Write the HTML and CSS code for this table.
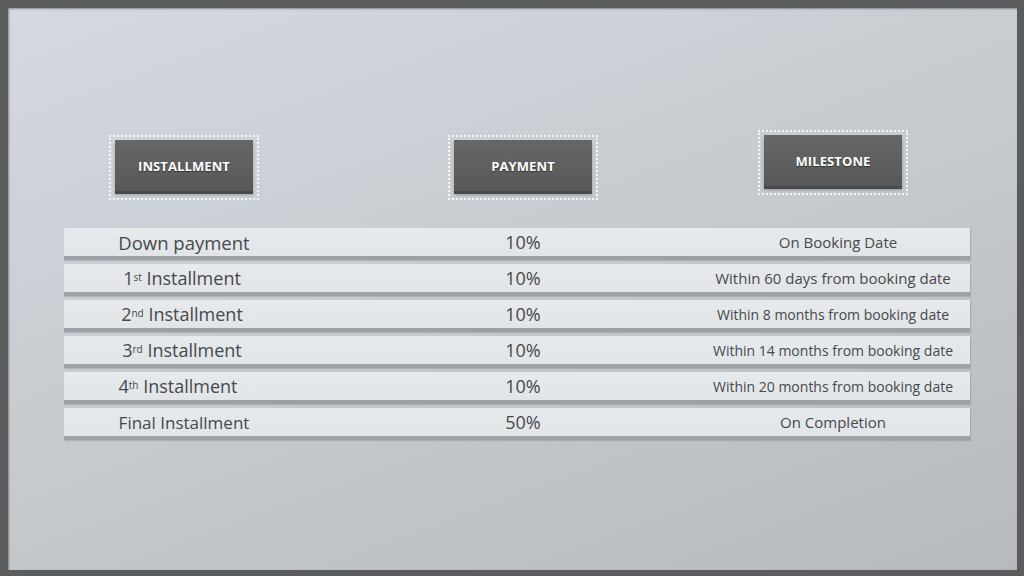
FILE: index.html
```html
<!DOCTYPE html>
<html lang="en">
<head>
<meta charset="utf-8">
<title>Payment Plan</title>
<link rel="stylesheet" href="styles.css">
</head>
<body>
<main class="frame">
  <section class="plan">
    <div class="heads">
      <div class="head-cell"><div class="head-box"><span class="head-label">INSTALLMENT</span></div></div>
      <div class="head-cell"><div class="head-box"><span class="head-label">PAYMENT</span></div></div>
      <div class="head-cell head-cell--raised"><div class="head-box"><span class="head-label">MILESTONE</span></div></div>
    </div>
    <div class="rows">
      <div class="row">
        <div class="cell c1">Down payment</div>
        <div class="cell c2">10%</div>
        <div class="cell c3 c3--shift">On Booking Date</div>
      </div>
      <div class="row">
        <div class="cell c1 c1--ord">1<sup>st</sup> Installment</div>
        <div class="cell c2">10%</div>
        <div class="cell c3">Within 60 days from booking date</div>
      </div>
      <div class="row">
        <div class="cell c1 c1--ord">2<sup>nd</sup> Installment</div>
        <div class="cell c2">10%</div>
        <div class="cell c3 c3--tight">Within 8 months from booking date</div>
      </div>
      <div class="row">
        <div class="cell c1 c1--ord">3<sup>rd</sup> Installment</div>
        <div class="cell c2">10%</div>
        <div class="cell c3 c3--tight">Within 14 months from booking date</div>
      </div>
      <div class="row">
        <div class="cell c1 c1--ord c1--left">4<sup>th</sup> Installment</div>
        <div class="cell c2">10%</div>
        <div class="cell c3 c3--tight">Within 20 months from booking date</div>
      </div>
      <div class="row">
        <div class="cell c1 c1--small">Final Installment</div>
        <div class="cell c2">50%</div>
        <div class="cell c3">On Completion</div>
      </div>
    </div>
  </section>
</main>
</body>
</html>
```

FILE: styles.css
```css
* { box-sizing: border-box; }

html, body {
  margin: 0;
  padding: 0;
  width: 1024px;
  height: 576px;
  overflow: hidden;
}

body {
  font-family: "Open Sans", "Noto Sans", sans-serif;
  color: #46494c;
}

.frame {
  width: 1024px;
  height: 576px;
  border-style: solid;
  border-color: #5c5c5c;
  border-width: 8px 7px 6px 8px;
  background: linear-gradient(160deg, #d3d9df 0%, #c7ccd1 45%, #b6babe 100%);
  box-shadow: inset 1px 1px 2px rgba(0,0,0,0.35);
}

.plan {
  padding: 122px 47px 0 56px;
}

.heads {
  display: grid;
  grid-template-columns: 240px 438px 182px 1fr;
  height: 98px;
}

.head-cell {
  display: flex;
  justify-content: center;
  align-items: flex-start;
  padding-top: 5px;
}

.head-cell--raised { padding-top: 0; }

.head-box {
  flex: none;
  width: 150px;
  height: 65px;
  border: 2px dotted #f4f5f6;
  padding: 3px 4px 7px 4px;
}

.head-label {
  display: flex;
  justify-content: center;
  align-items: center;
  height: 100%;
  background: linear-gradient(180deg, #666 0%, #5e5e5e 60%, #575757 100%);
  box-shadow: 0 3px 0 #4a4a4a, 0 4px 3px rgba(0,0,0,0.25);
  color: #fff;
  font-weight: 700;
  font-size: 13px;
  letter-spacing: 0.1px;
  text-shadow: 0 1px 1px rgba(0,0,0,0.5);
}

.rows {
  display: grid;
  grid-template-rows: repeat(6, 32px);
  row-gap: 4px;
}

.row {
  display: grid;
  grid-template-columns: 240px 438px 182px 1fr;
  background: linear-gradient(180deg, #e7eaed 0%, #e2e5e8 100%);
  border-bottom: 4px solid #9da1a5;
  box-shadow: 1px 1px 1px rgba(0,0,0,0.12);
}

.cell {
  display: flex;
  justify-content: center;
  align-items: center;
  white-space: pre;
}

.c1 { font-size: 18.5px; }
.c1--ord { font-size: 18px; padding-right: 4px; }
.c1--left { padding-right: 12px; }
.c1--small { font-size: 17px; }
.c2 { font-size: 18px; }
.c3 { font-size: 15px; }
.c3--tight { font-size: 14px; }
.c3--shift { padding-left: 10px; }

sup {
  font-size: 10px;
  line-height: 0;
  position: relative;
  top: -1px;
  vertical-align: super;
}
```
